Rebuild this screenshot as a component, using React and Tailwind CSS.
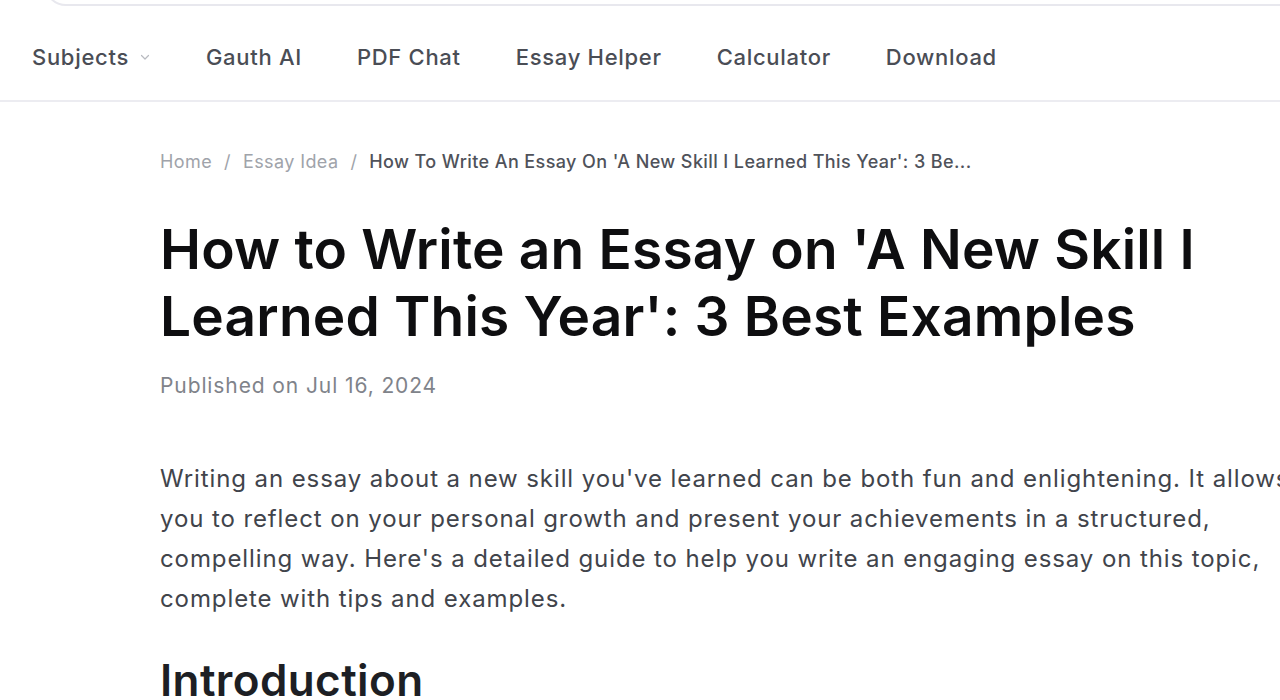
import React from 'react';

const navItems = ['Gauth AI', 'PDF Chat', 'Essay Helper', 'Calculator', 'Download'];

const App = () => {
  return (
    <div className="w-[1280px] h-[700px] overflow-hidden bg-white font-['Inter','Liberation_Sans',sans-serif]">
      {/* search bar peeking in at the top */}
      <div className="ml-[44px] w-[1300px] h-[48px] -mt-[42px] rounded-[22px] border-2 border-[#e8e8ee]" />

      <nav className="h-[96px] pt-[8px] border-b-2 border-[#ececf1] flex items-center pl-[32px] gap-[55px] text-[22px] font-medium text-[#4a4d55] tracking-[0.7px]">
        <div className="flex items-center gap-[10px]">
          <span>Subjects</span>
          <svg className="w-[12px] h-[12px] text-[#b8bac0]" viewBox="0 0 12 12" fill="none" stroke="currentColor" strokeWidth="1.2">
            <path d="M2.5 4.5 6 8l3.5-3.5" strokeLinecap="round" strokeLinejoin="round" />
          </svg>
        </div>
        {navItems.map((item) => (
          <span key={item}>{item}</span>
        ))}
      </nav>

      <main className="pl-[160px]">
        <div className="pt-[46px] flex items-center gap-[12px] text-[18px] tracking-[0.4px] text-[#a0a3aa] whitespace-nowrap">
          <span>Home</span>
          <span>/</span>
          <span>Essay Idea</span>
          <span>/</span>
          <span className="text-[#4f525a] font-medium">How To Write An Essay On 'A New Skill I Learned This Year': 3 Be...</span>
        </div>

        <h1 className="mt-[41px] text-[55px] leading-[67px] font-semibold text-[#0e0e10] tracking-[0.2px] whitespace-nowrap">
          How to Write an Essay on 'A New Skill I<br />
          Learned This Year': 3 Best Examples
        </h1>

        <p className="mt-[20px] text-[21px] tracking-[0.9px] text-[#80838a]">Published on Jul 16, 2024</p>

        <p className="mt-[57px] text-[24px] leading-[40px] tracking-[0.9px] text-[#41444b] whitespace-nowrap">
          Writing an essay about a new skill you've learned can be both fun and enlightening. It allows<br />
          you to reflect on your personal growth and present your achievements in a structured,<br />
          compelling way. Here's a detailed guide to help you write an engaging essay on this topic,<br />
          complete with tips and examples.
        </p>

        <h2 className="mt-[35px] text-[44px] leading-[52px] font-semibold text-[#1d1f24] tracking-[0.4px]">Introduction</h2>
      </main>
    </div>
  );
};

export default App;
